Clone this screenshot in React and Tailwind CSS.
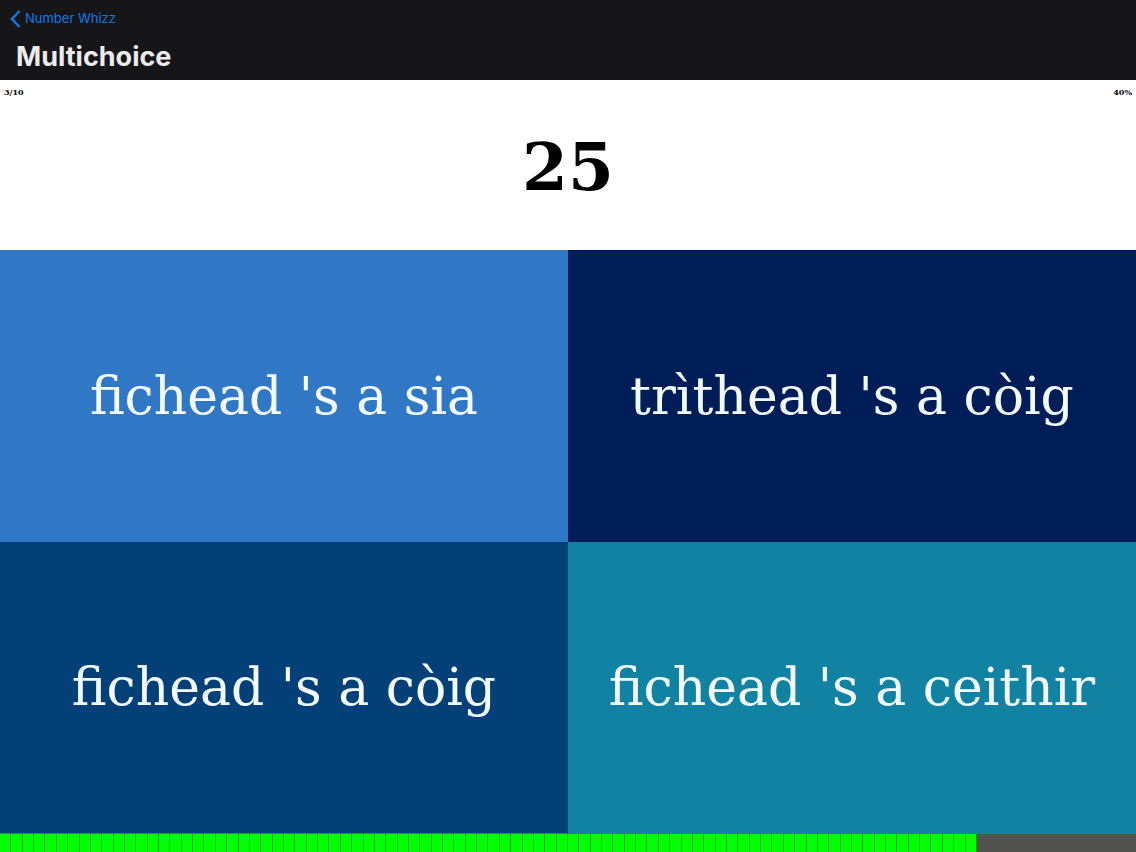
import React from "react";

const serif = "font-['DejaVu_Serif',serif]";

const answers = [
  { text: "fichead 's a sia", color: "bg-[#3078c6]" },
  { text: "trìthead 's a còig", color: "bg-[#001d57]" },
  { text: "fichead 's a còig", color: "bg-[#034078]" },
  { text: "fichead 's a ceithir", color: "bg-[#1282a2]" },
];

const TOTAL_TICKS = 100;
const ticksLeft = 86;

function Header() {
  return (
    <header className="flex h-20 shrink-0 flex-col bg-[#161518] font-['Inter',sans-serif]">
      <a href="#number-whizz" className="flex h-[37px] items-center gap-1 self-start pl-2.5 text-[13px] text-[#0b7ce6]">
        <svg viewBox="0 0 11 18" className="h-[18px] w-[11px]" fill="none" stroke="currentColor" strokeWidth="2.4" aria-hidden="true">
          <path d="M9.6 1 L1.8 9 L9.6 17" />
        </svg>
        Number Whizz
      </a>
      <h1 className="pl-4 text-[27px] leading-10 font-bold text-[#ececee]">Multichoice</h1>
    </header>
  );
}

function Question() {
  return (
    <section className={`flex h-[170px] shrink-0 flex-col bg-white text-black ${serif}`}>
      <div className="flex justify-between px-1 pt-1 text-[8px] leading-4 font-bold">
        <span>3/10</span>
        <span>40%</span>
      </div>
      <p className="flex flex-1 items-center justify-center pb-4 text-[66px] leading-none font-bold">25</p>
    </section>
  );
}

function TimeBar() {
  return (
    <div
      role="progressbar"
      aria-label="Time left"
      aria-valuemin={0}
      aria-valuemax={TOTAL_TICKS}
      aria-valuenow={ticksLeft}
      className="flex h-[19px] shrink-0 border-t border-[#238a60] bg-[#525250]"
    >
      {Array.from({ length: TOTAL_TICKS }, (_, i) => (
        <div
          key={i}
          className={i < ticksLeft ? "flex-1 border-r border-[#00a800] bg-[#00ff00]" : "flex-1 border-r border-transparent"}
        />
      ))}
    </div>
  );
}

export default function App() {
  return (
    <div className="flex min-h-screen flex-col">
      <Header />
      <Question />
      <main className="grid flex-1 grid-cols-2 grid-rows-2">
        {answers.map((a) => (
          <button key={a.text} type="button" className={`text-[52px] leading-none text-[#f4fbff] ${serif} ${a.color}`}>
            {a.text}
          </button>
        ))}
      </main>
      <TimeBar />
    </div>
  );
}
